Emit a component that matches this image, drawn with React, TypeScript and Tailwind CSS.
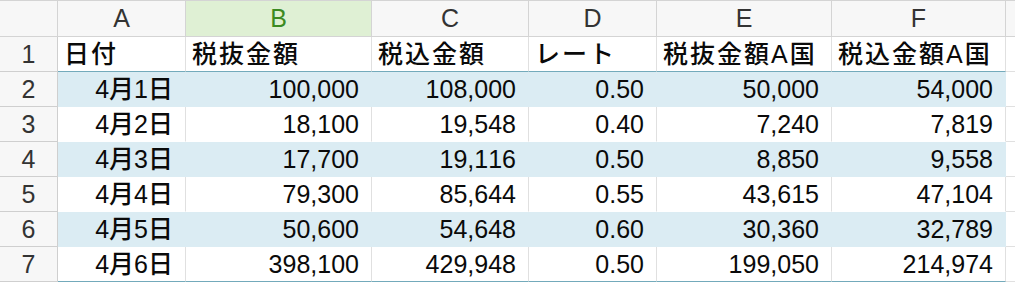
import React from "react";

const cols = ["A", "B", "C", "D", "E", "F"];
const heads = ["日付", "税抜金額", "税込金額", "レート", "税抜金額A国", "税込金額A国"];

const rows = [
  ["4月1日", "100,000", "108,000", "0.50", "50,000", "54,000"],
  ["4月2日", "18,100", "19,548", "0.40", "7,240", "7,819"],
  ["4月3日", "17,700", "19,116", "0.50", "8,850", "9,558"],
  ["4月4日", "79,300", "85,644", "0.55", "43,615", "47,104"],
  ["4月5日", "50,600", "54,648", "0.60", "30,360", "32,789"],
  ["4月6日", "398,100", "429,948", "0.50", "199,050", "214,974"],
];

// Japanese glyphs come out a little heavier than the Latin ones
const Mixed = ({ text }: { text: string }) => (
  <>
    {Array.from(text).map((ch, k) =>
      ch.charCodeAt(0) > 127 ? (
        <span key={k} className="font-medium">
          {ch}
        </span>
      ) : (
        <span key={k}>{ch}</span>
      ),
    )}
  </>
);

const RowHead = ({ n }: { n: number }) => (
  <div className="flex h-[35px] items-center justify-center border-r border-b border-[#cfcfcf] bg-[#f7f7f7] text-[#333]">
    {n}
  </div>
);

export default function App() {
  return (
    <div className="h-[287px] w-[1015px] overflow-hidden bg-white font-['Liberation_Sans','Noto_Sans_CJK_JP',sans-serif] text-[25px] leading-none text-[#0a0a0a]">
      <div className="grid grid-cols-[58px_128px_186px_157px_128px_175px_174px_1fr]">
        {/* column letters */}
        <div className="h-[37px] border-t border-r border-b border-[#d4d4d4] bg-[#f7f7f7]" />
        {cols.map((c) => (
          <div
            key={c}
            className={
              c === "B"
                ? "flex h-[37px] items-center justify-center border-t border-r border-b border-[#d4d4d4] bg-[#dff0d4] text-[#3c8a22]"
                : "flex h-[37px] items-center justify-center border-t border-r border-b border-[#d4d4d4] bg-[#f7f7f7] text-[#333]"
            }
          >
            {c}
          </div>
        ))}
        <div className="h-[37px] border-t border-b border-[#d4d4d4] bg-[#f7f7f7]" />

        {/* header row */}
        <RowHead n={1} />
        {heads.map((h) => (
          <div
            key={h}
            className="flex h-[35px] items-center border-r border-b border-r-[#e0e0e0] border-b-[#73aabb] pl-[6px] tracking-[2px]"
          >
            <Mixed text={h} />
          </div>
        ))}
        <div className="h-[35px] border-b border-[#e0e0e0]" />

        {rows.map((r, i) => {
          const band = i % 2 === 0;
          const last = i === rows.length - 1;
          return (
            <React.Fragment key={i}>
              <RowHead n={i + 2} />
              {r.map((v, j) => (
                <div
                  key={j}
                  className={
                    (band
                      ? "border-r border-[#dbecf3] bg-[#dbecf3] "
                      : "border-r border-[#e0e0e0] bg-white ") +
                    (last ? "border-b border-b-[#73aabb] " : "border-b border-b-transparent ") +
                    "flex h-[35px] items-center justify-end pr-[12px]"
                  }
                >
                  <Mixed text={v} />
                </div>
              ))}
              <div className="h-[35px] border-b border-[#e0e0e0]" />
            </React.Fragment>
          );
        })}
      </div>
    </div>
  );
}
